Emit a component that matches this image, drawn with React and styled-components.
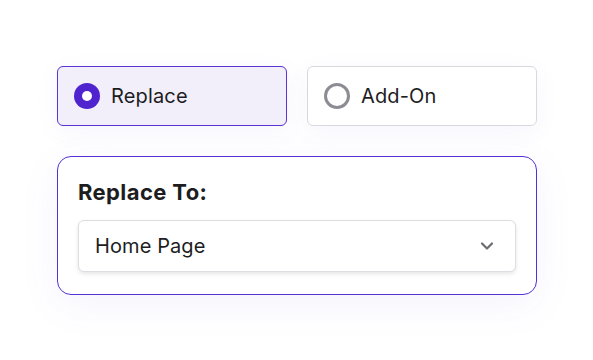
import React from "react";
import styled, { createGlobalStyle } from "styled-components";

const Global = createGlobalStyle`
  html, body { margin: 0; padding: 0; background: #fff; }
  body { font-family: "Inter", "Noto Sans", sans-serif; color: #1d1d1f; }
`;

const Page = styled.div`
  width: 593px;
  height: 360px;
  box-sizing: border-box;
  padding: 66px 56px 0 57px;
  display: flex;
  flex-direction: column;
  gap: 30px;
`;

const Options = styled.div`
  display: grid;
  grid-template-columns: 230px 230px;
  gap: 20px;
`;

const Option = styled.div`
  height: 60px;
  box-sizing: border-box;
  border-radius: 6px;
  border: ${(p) => (p.$active ? "1.8px solid #5a32d6" : "1.5px solid #d9d8de")};
  background: ${(p) => (p.$active ? "#f2effb" : "#fff")};
  box-shadow: 0 6px 24px rgba(110, 80, 220, 0.06);
  display: flex;
  align-items: center;
  gap: 11px;
  padding-left: 16px;
  font-size: 20px;
  letter-spacing: 0.15px;
  color: #1d1d1f;
`;

const Radio = styled.span`
  width: 26px;
  height: 26px;
  box-sizing: border-box;
  border-radius: 50%;
  flex: none;
  ${(p) =>
    p.$checked
      ? `background: #4f24cf; display:flex; align-items:center; justify-content:center;
         &::after { content:""; width: 10px; height: 10px; border-radius: 50%; background:#fff; }`
      : `border: 3px solid #8d8c95;`}
`;

const Card = styled.div`
  width: 480px;
  box-sizing: border-box;
  border: 1.8px solid #5530d4;
  border-radius: 14px;
  padding: 22px 20px 22px 20px;
  background: #fff;
  box-shadow: 0 10px 40px rgba(110, 80, 220, 0.07);
  display: flex;
  flex-direction: column;
  gap: 14px;
`;

const Label = styled.div`
  font-size: 22px;
  font-weight: 700;
  letter-spacing: 0.4px;
  line-height: 27px;
  color: #1d1d1f;
`;

const Select = styled.div`
  height: 52px;
  box-sizing: border-box;
  border: 1px solid #dedde2;
  border-radius: 6px;
  background: #fff;
  box-shadow: 0 2px 4px rgba(0, 0, 0, 0.1);
  display: flex;
  align-items: center;
  justify-content: space-between;
  padding: 0 21px 0 16px;
  font-size: 20px;
  letter-spacing: 0.1px;
  color: #1d1d1f;
`;

const Chevron = () => (
  <svg width="14" height="10" viewBox="0 0 14 10">
    <path d="M2 2.5 L7 7.5 L12 2.5" fill="none" stroke="#6b6b70" strokeWidth="2.2" strokeLinecap="round" strokeLinejoin="round" />
  </svg>
);

export default function App() {
  return (
    <>
      <Global />
      <Page>
        <Options>
          <Option $active>
            <Radio $checked />
            Replace
          </Option>
          <Option>
            <Radio />
            Add-On
          </Option>
        </Options>
        <Card>
          <Label>Replace To:</Label>
          <Select>
            Home Page
            <Chevron />
          </Select>
        </Card>
      </Page>
    </>
  );
}
